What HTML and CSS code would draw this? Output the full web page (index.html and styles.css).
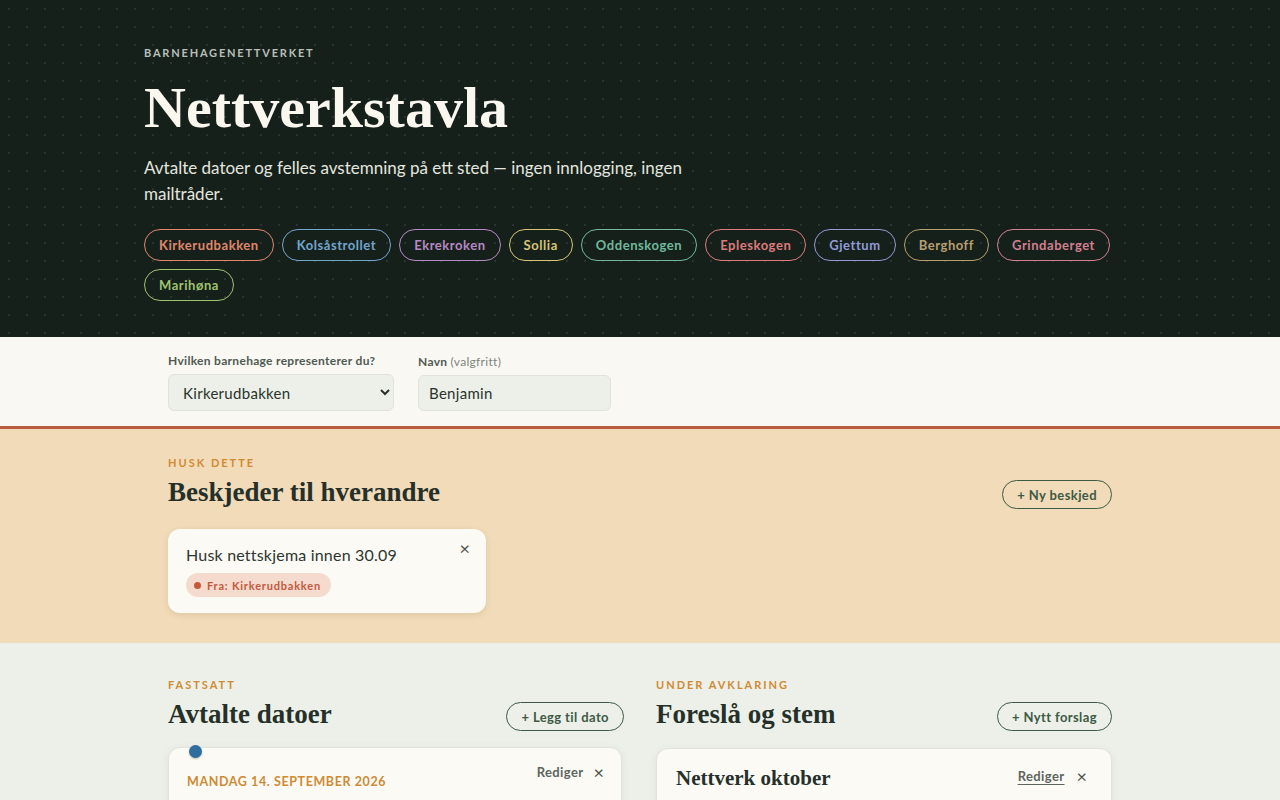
FILE: index.html
```html
<!DOCTYPE html>
<html lang="no">
<head>
    <meta charset="UTF-8">
    <meta name="viewport" content="width=device-width, initial-scale=1.0">
    <title>Nettverkstavla</title>
    <link rel="stylesheet" href="styles.css">
</head>
<body>
    <header class="hero">
        <div class="hero-inner">
            <p class="brand">Barnehagenettverket</p>
            <h1>Nettverkstavla</h1>
            <p class="lead">Avtalte datoer og felles avstemning på ett sted — ingen innlogging, ingen mailtråder.</p>
            <ul class="pills">
                <li class="pill c-kirke">Kirkerudbakken</li>
                <li class="pill c-kols">Kolsåstrollet</li>
                <li class="pill c-ekre">Ekrekroken</li>
                <li class="pill c-sollia">Sollia</li>
                <li class="pill c-odden">Oddenskogen</li>
                <li class="pill c-eple">Epleskogen</li>
                <li class="pill c-gjettum">Gjettum</li>
                <li class="pill c-berg">Berghoff</li>
                <li class="pill c-grinda">Grindaberget</li>
                <li class="pill c-mari">Marihøna</li>
            </ul>
        </div>
    </header>

    <section class="who">
        <div class="wrap who-row">
            <label class="field">
                <span class="field-label">Hvilken barnehage representerer du?</span>
                <select class="select">
                    <option>Kirkerudbakken</option>
                    <option>Kolsåstrollet</option>
                    <option>Ekrekroken</option>
                </select>
            </label>
            <label class="field">
                <span class="field-label">Navn <em>(valgfritt)</em></span>
                <input class="input" type="text" value="Benjamin">
            </label>
        </div>
    </section>

    <section class="notes">
        <div class="wrap">
            <div class="sec-head">
                <div>
                    <p class="kicker">Husk dette</p>
                    <h2>Beskjeder til hverandre</h2>
                </div>
                <button class="btn">+ Ny beskjed</button>
            </div>
            <div class="note">
                <p class="note-text">Husk nettskjema innen 30.09</p>
                <span class="close">×</span>
                <span class="from"><i class="dot"></i>Fra: Kirkerudbakken</span>
            </div>
        </div>
    </section>

    <section class="board">
        <div class="wrap cols">
            <div class="col">
                <div class="sec-head">
                    <div>
                        <p class="kicker">Fastsatt</p>
                        <h2>Avtalte datoer</h2>
                    </div>
                    <button class="btn">+ Legg til dato</button>
                </div>
                <div class="timeline">
                    <div class="date-card">
                        <span class="pin"></span>
                        <div class="card-top">
                            <p class="date">Mandag 14. september 2026</p>
                            <div class="actions">
                                <span class="edit">Rediger</span>
                                <span class="close">×</span>
                            </div>
                        </div>
                    </div>
                </div>
            </div>
            <div class="col">
                <div class="sec-head">
                    <div>
                        <p class="kicker">Under avklaring</p>
                        <h2>Foreslå og stem</h2>
                    </div>
                    <button class="btn">+ Nytt forslag</button>
                </div>
                <div class="poll-card">
                    <div class="card-top">
                        <h3>Nettverk oktober</h3>
                        <div class="actions">
                            <span class="edit link">Rediger</span>
                            <span class="close">×</span>
                        </div>
                    </div>
                </div>
            </div>
        </div>
    </section>
</body>
</html>
```

FILE: styles.css
```css
body {
    margin: 0;
    font-family: 'Lato', 'Open Sans', sans-serif;
    color: #27332b;
    background: #edf0e8;
}
p, h1, h2, h3, ul {
    margin: 0;
    padding: 0;
}

.hero {
    background-color: #15201b;
    background-image: radial-gradient(circle, rgba(255,255,255,0.09) 1px, transparent 1.5px);
    background-size: 18px 18px;
    background-position: 0 0;
    padding: 46px 0 36px;
}
.hero-inner {
    max-width: 992px;
    margin: 0 auto;
}
.brand {
    color: #b9bfb8;
    font-size: 11px;
    font-weight: 700;
    letter-spacing: 1.8px;
    text-transform: uppercase;
}
h1 {
    font-family: 'Liberation Serif', serif;
    color: #faf7ef;
    font-size: 58px;
    font-weight: 700;
    line-height: 1;
    margin-top: 20px;
}
.lead {
    color: #e4e6df;
    font-size: 17px;
    line-height: 26px;
    max-width: 570px;
    margin-top: 18px;
}
.pills {
    list-style: none;
    display: flex;
    flex-wrap: wrap;
    gap: 8px 8px;
    margin-top: 22px;
}
.pill {
    border: 1px solid currentColor;
    border-radius: 16px;
    padding: 0 14px;
    height: 30px;
    line-height: 30px;
    font-size: 13px;
    font-weight: 700;
    letter-spacing: 0.55px;
}
.c-kirke { color: #e0876c; }
.c-kols { color: #72a6cc; }
.c-ekre { color: #b889c4; }
.c-sollia { color: #d8c477; }
.c-odden { color: #72b89c; }
.c-eple { color: #df7b7c; }
.c-gjettum { color: #939ad4; }
.c-berg { color: #b89f70; }
.c-grinda { color: #d27f8f; }
.c-mari { color: #9fc26f; }

.wrap {
    max-width: 944px;
    margin: 0 auto;
}

.who {
    background: #faf8f3;
    border-bottom: 3px solid #b85c3f;
    padding: 16px 0 15px;
}
.who-row {
    display: flex;
    gap: 24px;
    align-items: flex-end;
}
.field {
    display: flex;
    flex-direction: column;
    gap: 6px;
}
.field-label {
    font-size: 12px;
    font-weight: 700;
    color: #4f5a52;
    letter-spacing: 0.3px;
}
.field-label em {
    font-style: normal;
    font-weight: 400;
    color: #7c857e;
}
.select, .input {
    font-family: inherit;
    font-size: 15px;
    color: #27332b;
    background: #edf0e8;
    border: 1px solid #dfe3da;
    border-radius: 6px;
    height: 37px;
    box-sizing: border-box;
    letter-spacing: 0.3px;
}
.select {
    width: 226px;
    padding: 0 10px;
}
.input {
    width: 193px;
    height: 36px;
    padding: 0 10px;
}

.notes {
    background: #f2dbb8;
    padding: 27px 0 30px;
}
.sec-head {
    display: flex;
    justify-content: space-between;
    align-items: flex-end;
}
.kicker {
    color: #d08a33;
    font-size: 11px;
    font-weight: 700;
    letter-spacing: 2px;
    text-transform: uppercase;
}
h2 {
    font-family: 'Liberation Serif', serif;
    font-size: 27px;
    font-weight: 700;
    color: #25302a;
    margin-top: 6px;
    line-height: 34px;
}
.btn {
    font-family: inherit;
    font-size: 13px;
    font-weight: 700;
    letter-spacing: 0.4px;
    color: #3c5a45;
    background: transparent;
    border: 1px solid #3c5a45;
    border-radius: 15px;
    height: 29px;
    padding: 0 14px;
}
.note {
    position: relative;
    width: 318px;
    box-sizing: border-box;
    margin-top: 20px;
    background: #fcfaf5;
    border-radius: 12px;
    box-shadow: 0 2px 6px rgba(80, 60, 30, 0.12);
    padding: 16px 18px 16px;
}
.note-text {
    font-size: 16px;
    letter-spacing: 0.2px;
    color: #2c352f;
}
.note .close {
    position: absolute;
    right: 16px;
    top: 9px;
}
.close {
    font-size: 18px;
    color: #4a524c;
    line-height: 20px;
}
.from {
    display: inline-flex;
    align-items: center;
    gap: 6px;
    margin-top: 9px;
    background: #f4dbce;
    color: #c4583d;
    font-size: 11px;
    font-weight: 700;
    letter-spacing: 0.8px;
    border-radius: 12px;
    padding: 0 10px 0 8px;
    height: 24px;
}
.dot {
    width: 7px;
    height: 7px;
    border-radius: 50%;
    background: #c4583d;
}

.board {
    padding: 35px 0 40px;
}
.cols {
    display: grid;
    grid-template-columns: 1fr 1fr;
    gap: 32px;
}
.timeline {
    margin-top: 16px;
    padding-right: 2px;
}
.date-card, .poll-card {
    position: relative;
    background: #fcfaf5;
    border: 1px solid #e1e3dc;
    border-radius: 12px;
    box-shadow: 0 2px 8px rgba(40, 60, 40, 0.08);
    height: 120px;
}
.poll-card {
    margin-top: 17px;
    padding: 17px 24px 17px 19px;
}
.poll-card .actions {
    gap: 12px;
}
.date-card {
    padding: 14px 17px 14px 18px;
}
.pin {
    position: absolute;
    left: 20px;
    top: -3px;
    width: 13px;
    height: 13px;
    border-radius: 50%;
    background: #2f6d9e;
    box-shadow: 0 1px 2px rgba(0,0,0,0.25);
}
.card-top {
    display: flex;
    justify-content: space-between;
    align-items: flex-start;
}
.date {
    color: #cf8a34;
    font-size: 12.5px;
    font-weight: 700;
    letter-spacing: 0.6px;
    text-transform: uppercase;
    margin-top: 12px;
}
.actions {
    display: flex;
    align-items: center;
    gap: 10px;
}
.edit {
    font-size: 13px;
    font-weight: 700;
    letter-spacing: 0.4px;
    color: #5d655f;
}
.edit.link {
    text-decoration: underline;
    text-underline-offset: 3px;
}
h3 {
    font-family: 'Liberation Serif', serif;
    font-size: 21px;
    font-weight: 700;
    color: #25302a;
}
```
